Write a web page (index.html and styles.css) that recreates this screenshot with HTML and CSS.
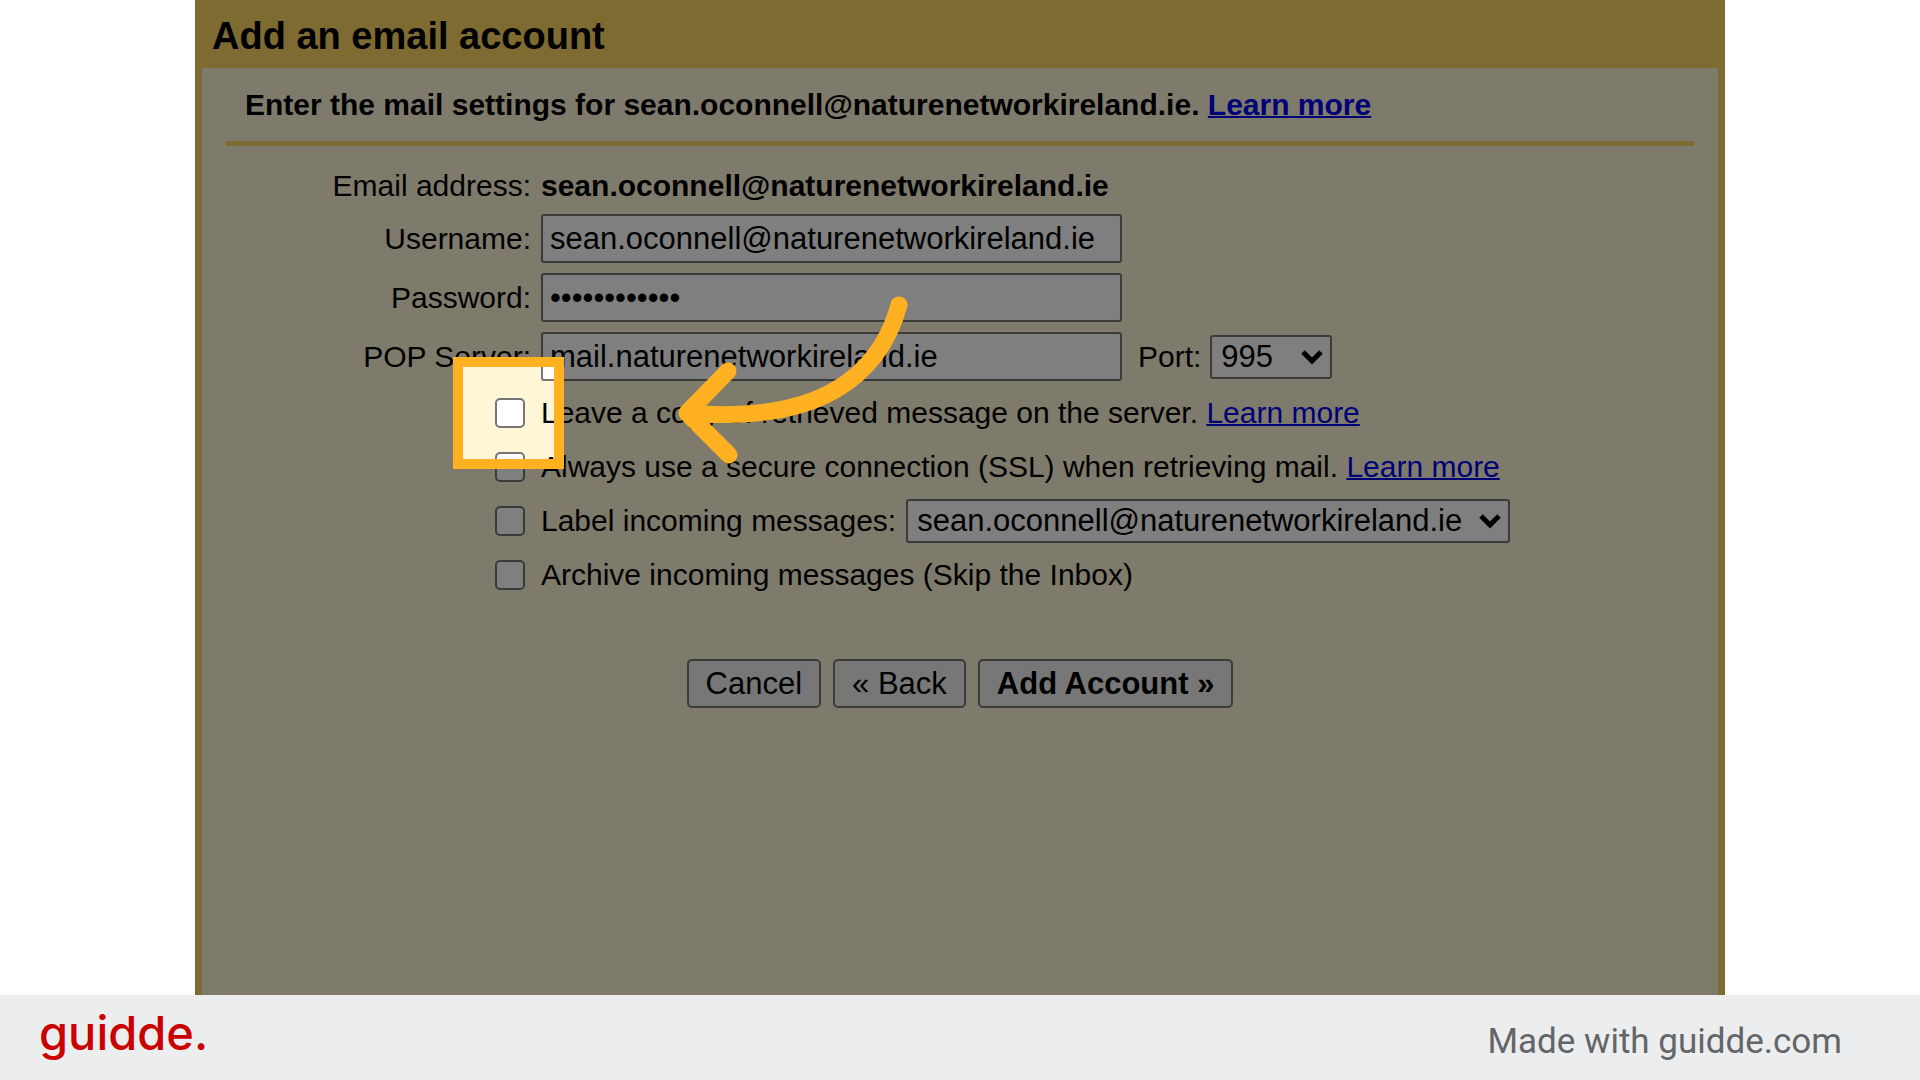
FILE: index.html
```html
<!DOCTYPE html>
<html lang="en">
<head>
  <meta charset="utf-8">
  <meta name="viewport" content="width=device-width, initial-scale=1">
  <title>Add an email account</title>
  <link rel="stylesheet" href="styles.css">
</head>
<body>
  <main class="stage">
    <section class="panel">
      <h1 class="panel-title">Add an email account</h1>
      <div class="panel-body">
        <p class="intro">Enter the mail settings for sean.oconnell@naturenetworkireland.ie. <a href="#">Learn more</a></p>
        <form class="form">
          <div class="row">
            <span class="row-label">Email address:</span>
            <strong>sean.oconnell@naturenetworkireland.ie</strong>
          </div>
          <div class="row">
            <label class="row-label" for="username">Username:</label>
            <input class="field" id="username" type="text" value="sean.oconnell@naturenetworkireland.ie">
          </div>
          <div class="row">
            <label class="row-label" for="password">Password:</label>
            <input class="field" id="password" type="password" value="abcdefghijkl">
          </div>
          <div class="row">
            <label class="row-label" for="server">POP Server:</label>
            <div class="server">
              <input class="field" id="server" type="text" value="mail.naturenetworkireland.ie">
              <label for="port">Port:</label>
              <span class="select select-port">
                <select id="port"><option>995</option></select>
                <svg class="chevron" viewBox="0 0 22 15" aria-hidden="true"><path d="M2 2l9 9 9-9"/></svg>
              </span>
            </div>
          </div>
          <div class="row row-option">
            <span class="tick">
              <input class="check" id="leave" type="checkbox">
              <span class="spotlight"></span>
              <svg class="arrow" viewBox="0 0 240 180" aria-hidden="true"><path d="M227 15C207 88 145 134 15 123M56 81L15 123L57 165"/></svg>
            </span>
            <div><label for="leave">Leave a copy of retrieved message on the server.</label> <a href="#">Learn more</a></div>
          </div>
          <div class="row row-option">
            <span class="tick"><input class="check" id="ssl" type="checkbox"></span>
            <div><label for="ssl">Always use a secure connection (SSL) when retrieving mail.</label> <a href="#">Learn more</a></div>
          </div>
          <div class="row row-option">
            <span class="tick"><input class="check" id="tag" type="checkbox"></span>
            <div class="tag">
              <label for="tag">Label incoming messages:</label>
              <span class="select select-tag">
                <select aria-label="Label"><option>sean.oconnell@naturenetworkireland.ie</option></select>
                <svg class="chevron" viewBox="0 0 22 15" aria-hidden="true"><path d="M2 2l9 9 9-9"/></svg>
              </span>
            </div>
          </div>
          <div class="row row-option">
            <span class="tick"><input class="check" id="archive" type="checkbox"></span>
            <label for="archive">Archive incoming messages (Skip the Inbox)</label>
          </div>
          <div class="actions">
            <button class="button" type="button">Cancel</button>
            <button class="button" type="button">« Back</button>
            <button class="button button-main" type="button">Add Account »</button>
          </div>
        </form>
      </div>
    </section>
  </main>
  <footer class="footer">
    <span class="brand">guidde.</span>
    <span class="credit">Made with guidde.com</span>
  </footer>
</body>
</html>
```
FILE: styles.css
```css
* {
  box-sizing: border-box;
}

body {
  margin: 0;
  min-height: 100vh;
  display: flex;
  flex-direction: column;
  background: #fff;
  color: #000;
  font: 30px/36px "Liberation Sans", Arial, sans-serif;
}

a {
  color: #0000ee;
  text-decoration-thickness: 2px;
}

.stage {
  flex: 1;
  display: flex;
  padding: 0 195px;
}

.panel {
  flex: 1;
  display: flex;
  flex-direction: column;
  position: relative;
  overflow: hidden;
  background: #fcd662;
  padding: 0 7px;
}

.panel-title {
  margin: 0;
  padding: 16px 10px 12px;
  font-size: 38px;
  line-height: 40px;
}

.panel-body {
  flex: 1;
  background: #fff6d8;
}

.intro {
  margin: 0 24px;
  padding: 19px 19px 18px;
  border-bottom: 5px solid #fcd662;
  font-weight: bold;
}

.form {
  display: flex;
  flex-direction: column;
  gap: 10px;
  padding: 22px 0;
}

.row {
  display: grid;
  grid-template-columns: 329px 1fr;
  column-gap: 10px;
  align-items: center;
  min-height: 36px;
}

.row-label {
  text-align: right;
}

.row-option {
  min-height: 44px;
}

.field {
  width: 581px;
  height: 49px;
  padding: 0 7px;
  border: 2px solid #767676;
  border-radius: 3px;
  background: #fff;
  font: inherit;
  font-size: 31px;
}

.server {
  display: flex;
  align-items: center;
}

.server .field {
  margin-right: 16px;
}

.select {
  position: relative;
  display: flex;
}

.select select {
  appearance: none;
  width: 100%;
  height: 44px;
  margin: 0;
  padding: 0 9px;
  border: 2px solid #767676;
  border-radius: 3px;
  background: #fff;
  color: #000;
  font: inherit;
  font-size: 31px;
}

.select-port {
  width: 122px;
  margin-left: 9px;
}

.select-tag {
  width: 604px;
  margin-left: 10px;
}

.chevron {
  position: absolute;
  right: 9px;
  top: 15px;
  width: 22px;
  height: 15px;
  fill: none;
  stroke: #000;
  stroke-width: 5;
  pointer-events: none;
}

.tick {
  position: relative;
  justify-self: end;
  display: flex;
  margin-right: 6px;
}

.check {
  appearance: none;
  width: 30px;
  height: 30px;
  margin: 0;
  border: 2px solid #767676;
  border-radius: 5px;
  background: #fff;
}

.check:checked {
  background: #0075ff;
}

.tag {
  display: flex;
  align-items: center;
}

/* Dims everything in the panel except the inside of the frame. */
.spotlight {
  position: absolute;
  z-index: 1;
  left: -42px;
  top: -41px;
  width: 111px;
  height: 112px;
  border: 10px solid #ffb122;
  box-shadow: 0 0 0 2000px rgba(0, 0, 0, 0.5);
  pointer-events: none;
}

.arrow {
  position: absolute;
  z-index: 2;
  left: 177px;
  top: -108px;
  width: 240px;
  height: 180px;
  fill: none;
  stroke: #ffb122;
  stroke-width: 17;
  stroke-linecap: round;
  stroke-linejoin: round;
  pointer-events: none;
}

.actions {
  display: flex;
  justify-content: center;
  gap: 12px;
  margin-top: 52px;
}

.button {
  height: 49px;
  padding: 0 17px;
  border: 2px solid #767676;
  border-radius: 5px;
  background: #efefef;
  color: #000;
  font: inherit;
  font-size: 31px;
}

.button-main {
  font-weight: bold;
}

.footer {
  display: flex;
  align-items: center;
  justify-content: space-between;
  height: 85px;
  padding: 0 78px 0 39px;
  background: #ecedef;
}

.brand {
  padding-bottom: 10px;
  color: #cb0000;
  font: 500 47px/50px Inter, sans-serif;
}

.credit {
  padding-top: 8px;
  color: #636567;
  font: 35px/40px Roboto, sans-serif;
}
```
